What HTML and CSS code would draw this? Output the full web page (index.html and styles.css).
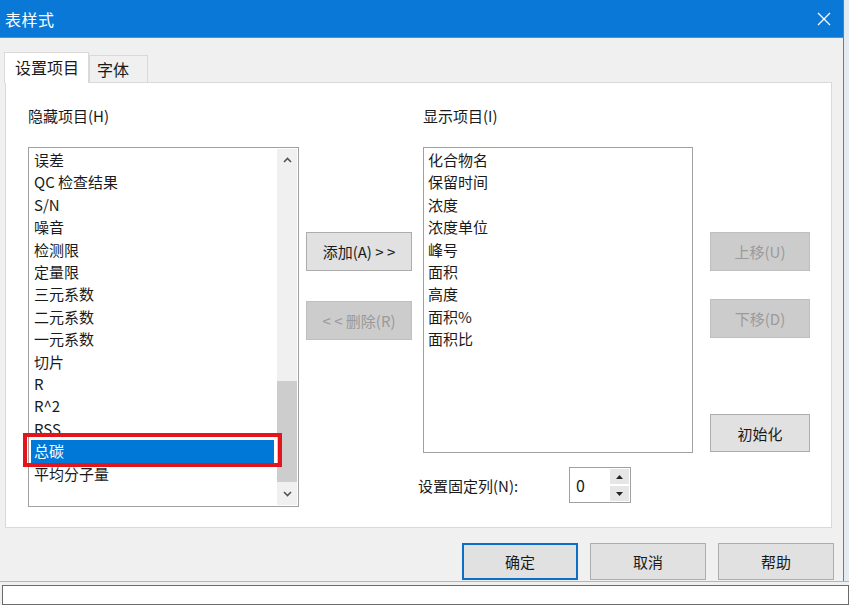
FILE: index.html
```html
<!DOCTYPE html>
<html lang="zh-CN">
<head>
  <meta charset="UTF-8">
  <title>表样式</title>
  <link rel="stylesheet" href="styles.css">
</head>
<body>
  <div class="screen">
    <div class="top">
      <!-- Dialog -->
      <div class="dialog">
        <div class="titlebar">
          <span class="title">表样式</span>
          <svg class="close" width="14" height="14" viewBox="0 0 14 14">
            <path d="M1 1 L13 13 M13 1 L1 13" stroke="#ffffff" stroke-width="1.3" fill="none"/>
          </svg>
        </div>

        <div class="dialog-body">
          <div class="tabs">
            <div class="tab active">设置项目</div>
            <div class="tab">字体</div>
          </div>

          <div class="panel">
            <!-- Hidden items -->
            <div class="col col-hidden">
              <div class="label">隐藏项目(H)</div>
              <div class="listbox hidden-list">
                <ul class="items">
                  <li>误差</li>
                  <li>QC 检查结果</li>
                  <li>S/N</li>
                  <li>噪音</li>
                  <li>检测限</li>
                  <li>定量限</li>
                  <li>三元系数</li>
                  <li>二元系数</li>
                  <li>一元系数</li>
                  <li>切片</li>
                  <li>R</li>
                  <li>R^2</li>
                  <li>RSS</li>
                  <li class="selected">总碳</li>
                  <li>平均分子量</li>
                </ul>
                <div class="scrollbar">
                  <div class="sb-btn">
                    <svg width="9" height="6" viewBox="0 0 9 6"><path d="M1 5 L4.5 1.5 L8 5" stroke="#555" stroke-width="1.6" fill="none"/></svg>
                  </div>
                  <div class="sb-track"><div class="sb-thumb"></div></div>
                  <div class="sb-btn">
                    <svg width="9" height="6" viewBox="0 0 9 6"><path d="M1 1 L4.5 4.5 L8 1" stroke="#555" stroke-width="1.6" fill="none"/></svg>
                  </div>
                </div>
                <div class="mark"></div>
              </div>
            </div>

            <!-- Add / remove -->
            <div class="col col-move">
              <button class="btn">添加(A) &gt; &gt;</button>
              <button class="btn disabled">&lt; &lt; 删除(R)</button>
            </div>

            <!-- Shown items -->
            <div class="col col-shown">
              <div class="label">显示项目(I)</div>
              <div class="listbox shown-list">
                <ul class="items">
                  <li>化合物名</li>
                  <li>保留时间</li>
                  <li>浓度</li>
                  <li>浓度单位</li>
                  <li>峰号</li>
                  <li>面积</li>
                  <li>高度</li>
                  <li>面积%</li>
                  <li>面积比</li>
                </ul>
              </div>
              <div class="fixed-row">
                <span class="fixed-label">设置固定列(N):</span>
                <div class="spin">
                  <span class="spin-value">0</span>
                  <div class="spin-btns">
                    <div class="spin-btn"><svg width="7" height="4" viewBox="0 0 7 4"><path d="M0 4 L3.5 0 L7 4 Z" fill="#222"/></svg></div>
                    <div class="spin-btn"><svg width="7" height="4" viewBox="0 0 7 4"><path d="M0 0 L3.5 4 L7 0 Z" fill="#222"/></svg></div>
                  </div>
                </div>
              </div>
            </div>

            <!-- Ordering -->
            <div class="col col-order">
              <button class="btn disabled">上移(U)</button>
              <button class="btn disabled btn-down">下移(D)</button>
              <button class="btn btn-init">初始化</button>
            </div>
          </div>

          <div class="actions">
            <button class="btn btn-action default">确定</button>
            <button class="btn btn-action">取消</button>
            <button class="btn btn-action">帮助</button>
          </div>
        </div>
      </div>
      <div class="backdrop-side"></div>
    </div>
    <div class="backdrop-bottom"><div class="status-box"></div></div>
  </div>
</body>
</html>
```

FILE: styles.css
```css
* {
  margin: 0;
  padding: 0;
  box-sizing: border-box;
}

body {
  width: 849px;
  height: 605px;
  overflow: hidden;
  font-family: "Noto Sans CJK SC", "Microsoft YaHei", sans-serif;
  font-size: 15px;
  color: #1a1a1a;
  background-color: #f0f0f0;
}

.screen {
  display: flex;
  flex-direction: column;
  height: 605px;
}

.top {
  display: flex;
  height: 592px;
}

/* Dialog */
.dialog {
  width: 843px;
  display: flex;
  flex-direction: column;
  background-color: #f0f0f0;
}

.titlebar {
  height: 38px;
  display: flex;
  justify-content: space-between;
  align-items: center;
  padding: 0 12px 0 5px;
  background-color: #0a78d7;
  border-bottom: 1px solid #3f95de;
}

.title {
  color: #ffffff;
  font-size: 16px;
  letter-spacing: 0.5px;
}

.dialog-body {
  flex: 1;
  padding: 14px 11px 0 5px;
  display: flex;
  flex-direction: column;
}

/* Tabs */
.tabs {
  display: flex;
  align-items: flex-end;
  height: 30px;
  margin-left: -1px;
}

.tab {
  width: 59px;
  height: 27px;
  padding-left: 7px;
  font-size: 16px;
  line-height: 27px;
  background-color: #f0f0f0;
  border: 1px solid #d9d9d9;
  border-bottom: none;
}

.tab.active {
  width: 85px;
  height: 31px;
  margin-bottom: -1px;
  padding-left: 10px;
  line-height: 29px;
  background-color: #ffffff;
  border-color: #d9d9d9;
  position: relative;
  z-index: 1;
}

.panel {
  height: 446px;
  background-color: #ffffff;
  border: 1px solid #d9d9d9;
  display: flex;
  padding: 22px 0 0 22px;
}

.col {
  display: flex;
  flex-direction: column;
}

.label {
  height: 22px;
  line-height: 22px;
  margin-bottom: 20px;
}

/* List boxes */
.listbox {
  background-color: #ffffff;
  border: 1px solid #a0a0a0;
  position: relative;
  display: flex;
}

.items {
  list-style: none;
  flex: 1;
  padding-top: 1px;
  line-height: 22.4px;
  white-space: nowrap;
  overflow: hidden;
}

.col-hidden {
  width: 271px;
}

.hidden-list {
  height: 360px;
}

.hidden-list .items {
  margin: 0 3px 0 2px;
}

.hidden-list .items li {
  padding-left: 3px;
}

.hidden-list .items li.selected {
  background-color: #0078d7;
  color: #ffffff;
}

.scrollbar {
  width: 20px;
  margin: 1px 1px 1px 0;
  display: flex;
  flex-direction: column;
  background-color: #f0f0f0;
}

.sb-btn {
  height: 22px;
  display: flex;
  align-items: center;
  justify-content: center;
}

.sb-track {
  flex: 1;
}

.sb-thumb {
  margin-top: 210px;
  height: 101px;
  background-color: #cdcdcd;
}

.mark {
  position: absolute;
  left: -6px;
  top: 285px;
  width: 259px;
  height: 34px;
  border: 4px solid #e3141c;
  z-index: 2;
}

/* Middle buttons */
.col-move {
  width: 106px;
  margin-left: 7px;
  padding-top: 127px;
  gap: 30px;
}

.btn {
  height: 39px;
  font-family: inherit;
  font-size: 15px;
  color: #1a1a1a;
  background-color: #e1e1e1;
  border: 1px solid #adadad;
}

.btn.disabled {
  color: #9a9a9a;
  background-color: #cccccc;
  border-color: #bfbfbf;
}

/* Shown items */
.col-shown {
  width: 270px;
  margin-left: 11px;
}

.shown-list {
  height: 306px;
}

.shown-list .items {
  padding-left: 4px;
}

.fixed-row {
  display: flex;
  align-items: center;
  margin: 14px 0 0 -5px;
  height: 36px;
}

.fixed-label {
  width: 151px;
}

.spin {
  width: 62px;
  height: 36px;
  display: flex;
  border: 1px solid #a0a0a0;
  background-color: #ffffff;
}

.spin-value {
  flex: 1;
  padding: 5px 0 0 6px;
  font-size: 16px;
}

.spin-btns {
  width: 21px;
  display: flex;
  flex-direction: column;
  gap: 2px;
  padding: 1px;
}

.spin-btn {
  flex: 1;
  background-color: #e6e6e6;
  display: flex;
  align-items: center;
  justify-content: center;
}

/* Ordering buttons */
.col-order {
  width: 100px;
  margin-left: 17px;
  padding-top: 127px;
}

.btn-down {
  margin-top: 28px;
}

.btn-init {
  margin-top: 76px;
  height: 38px;
}

/* Dialog actions */
.actions {
  display: flex;
  justify-content: flex-end;
  gap: 12px;
  margin: 15px -2px 0 0;
}

.btn-action {
  width: 116px;
  height: 37px;
}

.btn-action.default {
  border: 2px solid #0a6fc9;
}

/* Background application */
.backdrop-side {
  flex: 1;
  background-color: #e4ecf2;
  border-left: 1px solid #5d7f9e;
}

.backdrop-bottom {
  flex: 1;
  border-top: 1px solid #8cc2dc;
  padding: 3px 0 0 2px;
  background-color: #f0f0f0;
}

.status-box {
  height: 20px;
  background-color: #ffffff;
  border: 1px solid #6a6a6a;
}
```
